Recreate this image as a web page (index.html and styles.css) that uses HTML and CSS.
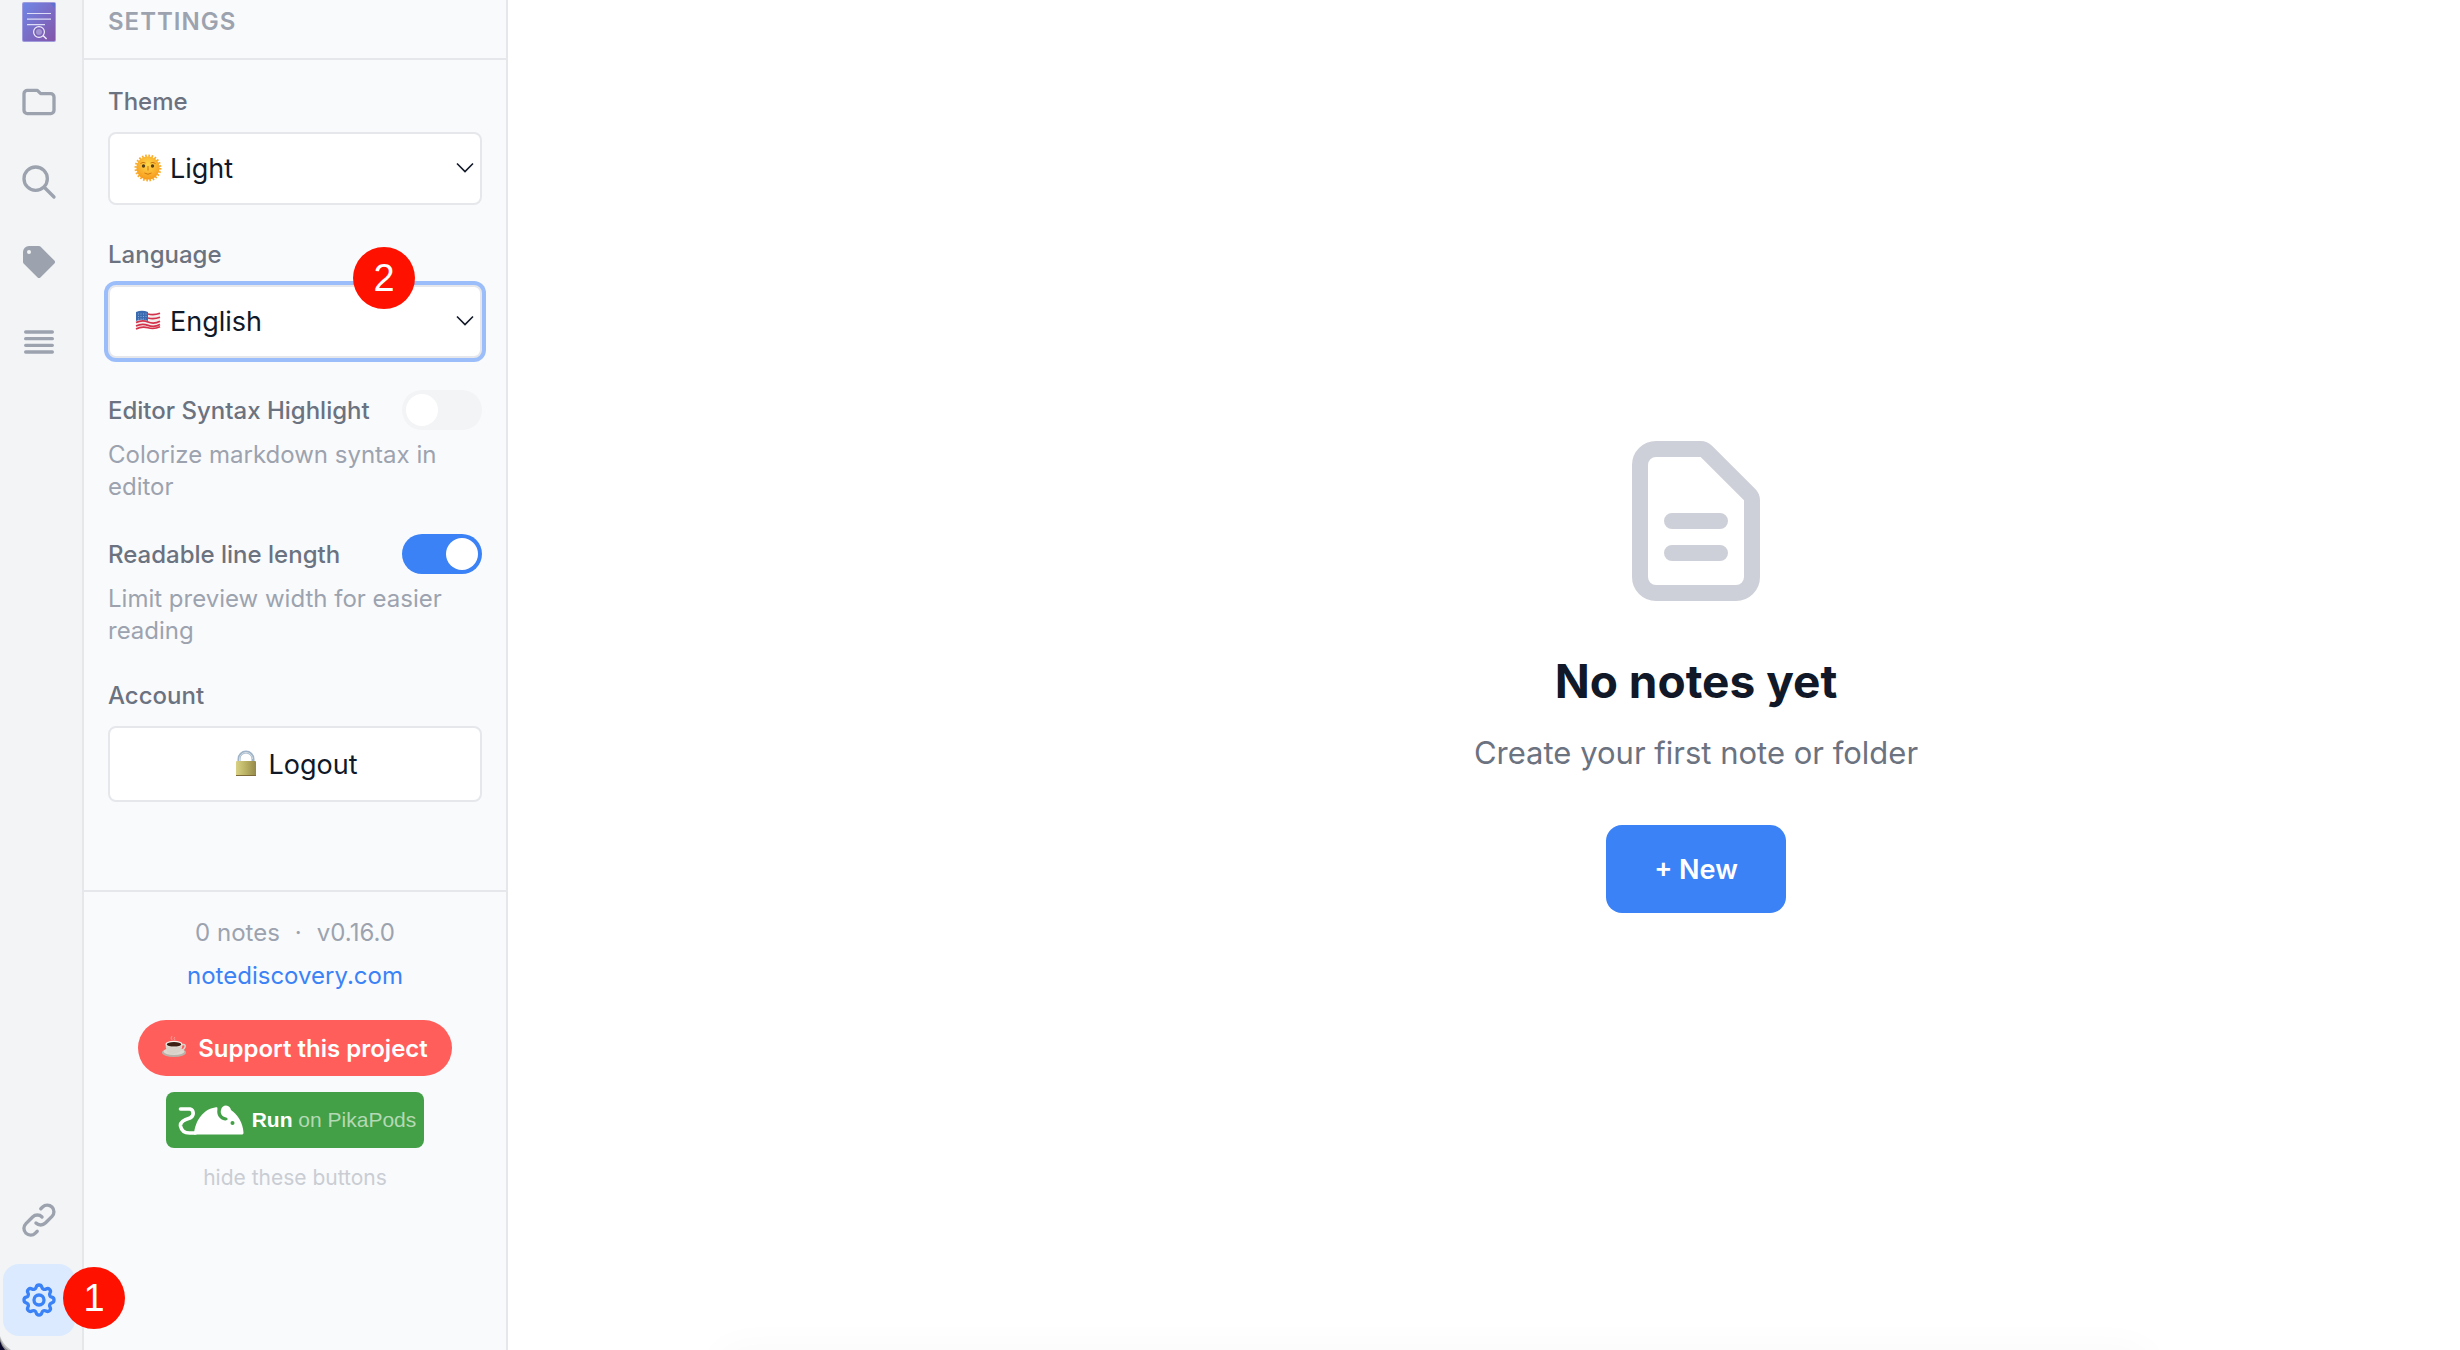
FILE: index.html
```
<!DOCTYPE html>
<html lang="en">
<head>
<meta charset="utf-8">
<title>NoteDiscovery</title>
<link rel="stylesheet" href="styles.css">
</head>
<body>
<div class="app">
  <nav class="rail" aria-label="Views">
    <svg class="logo" viewBox="0 0 34 40" aria-hidden="true">
      <defs>
        <linearGradient id="logo-fill" x1="0" y1="0" x2="1" y2="1">
          <stop offset="0" stop-color="#6f86e6"/><stop offset="1" stop-color="#8455a9"/>
        </linearGradient>
      </defs>
      <rect width="34" height="40" rx="2" fill="#a09bdd"/>
      <rect x="1" y="1" width="32" height="38" rx="1" fill="url(#logo-fill)"/>
      <path d="M28 1h5v5z" fill="#5f6fd0"/>
      <path d="M5 11.500h24M5 17.200h24M5 22.700h18" stroke="#dcdcf6" stroke-width="1.200"/>
      <circle cx="17" cy="30" r="5.400" fill="#7a63b8" stroke="#f1effa" stroke-width="1.200"/>
      <circle cx="17" cy="30" r="3" fill="#a394d2"/>
      <path d="M21 33.500l3.600 3.600" stroke="#f1effa" stroke-width="1.400"/>
    </svg>
    <button class="rail-btn" type="button" aria-label="Files"><svg class="line-icon" viewBox="0 0 24 24"><path d="M3 7v10a2 2 0 002 2h14a2 2 0 002-2V9a2 2 0 00-2-2h-6l-2-2H5a2 2 0 00-2 2z"/></svg></button>
    <button class="rail-btn" type="button" aria-label="Search"><svg class="line-icon" viewBox="0 0 24 24"><path d="M21 21l-6-6m2-5a7 7 0 11-14 0 7 7 0 0114 0z"/></svg></button>
    <button class="rail-btn" type="button" aria-label="Tags"><svg class="solid-icon" viewBox="0 0 20 20"><path fill-rule="evenodd" d="M17.707 9.293a1 1 0 010 1.414l-7 7a1 1 0 01-1.414 0l-7-7A.997.997 0 012 10V5a3 3 0 013-3h5c.256 0 .512.098.707.293l7 7zM5 6a1 1 0 100-2 1 1 0 000 2z" clip-rule="evenodd"/></svg></button>
    <button class="rail-btn" type="button" aria-label="Outline"><svg class="line-icon" viewBox="0 0 24 24"><path d="M4 6h16M4 10h16M4 14h16M4 18h16"/></svg></button>
    <span class="rail-space"></span>
    <button class="rail-btn" type="button" aria-label="Backlinks"><svg class="line-icon" viewBox="0 0 24 24"><path d="M13.828 10.172a4 4 0 00-5.656 0l-4 4a4 4 0 105.656 5.656l1.102-1.101m-.758-4.899a4 4 0 005.656 0l4-4a4 4 0 00-5.656-5.656l-1.100 1.100"/></svg></button>
    <button class="rail-btn rail-btn-active" type="button" aria-label="Settings"><svg class="line-icon" viewBox="0 0 24 24"><path d="M10.325 4.317c.426-1.756 2.924-1.756 3.350 0a1.724 1.724 0 002.573 1.066c1.543-.94 3.310.826 2.370 2.370a1.724 1.724 0 001.065 2.572c1.756.426 1.756 2.924 0 3.350a1.724 1.724 0 00-1.066 2.573c.94 1.543-.826 3.310-2.370 2.370a1.724 1.724 0 00-2.572 1.065c-.426 1.756-2.924 1.756-3.350 0a1.724 1.724 0 00-2.573-1.066c-1.543.94-3.310-.826-2.370-2.370a1.724 1.724 0 00-1.065-2.572c-1.756-.426-1.756-2.924 0-3.350a1.724 1.724 0 001.066-2.573c-.94-1.543.826-3.310 2.370-2.370.996.608 2.296.07 2.572-1.065z"/><path d="M15 12a3 3 0 11-6 0 3 3 0 016 0z"/></svg><span class="marker marker-one">1</span></button>
    <svg class="window-corner" viewBox="0 0 12 16" aria-hidden="true"><path d="M0 2Q3 11 11 16H0z" fill="#c4c4c4"/><path d="M0 4Q2 12 8 16H0z" fill="#8c8c8c"/><path d="M0 7Q2 13 5 16H0z" fill="#0a0a2c"/></svg>
  </nav>

  <aside class="sidebar">
    <h2 class="panel-title">SETTINGS</h2>
    <div class="settings">
      <div class="field">
        <label class="label" for="theme">Theme</label>
        <div class="select-wrap">
          <svg class="emoji select-emoji" viewBox="0 0 28 28" aria-hidden="true">
            <defs><radialGradient id="sun-fill" cx=".5" cy=".35" r=".65"><stop offset="0" stop-color="#ffd84a"/><stop offset="1" stop-color="#f79a1c"/></radialGradient></defs>
            <circle cx="14" cy="14" r="12" fill="none" stroke="#f9ab2b" stroke-width="3" stroke-dasharray="1.600 1.540"/>
            <circle cx="14" cy="14" r="11.500" fill="url(#sun-fill)"/>
            <circle cx="9.500" cy="12" r="1.700" fill="#54401c"/><circle cx="18.500" cy="12" r="1.700" fill="#54401c"/>
            <path d="M6.500 9.500q2.500-2 5-.5M16.500 9q2.500-1.500 5 .5M14 12v4.500M10.500 19q3.500 2.500 7 0" fill="none" stroke="#cf7710" stroke-width="1"/>
          </svg>
          <select class="select" id="theme"><option>Light</option></select>
          <svg class="chevron" viewBox="0 0 18 12" aria-hidden="true"><path d="M1 1.500l8 8 8-8" stroke-width="1.600"/></svg>
        </div>
      </div>
      <div class="field">
        <label class="label" for="language">Language</label>
        <div class="select-wrap">
          <svg class="emoji select-emoji" viewBox="0 0 28 28" aria-hidden="true">
            <path d="M2 7q6-3 12-1t12-1v15q-6 3-12 1T2 22z" fill="#f3eeee"/>
            <path d="M14 7q6 1.500 12-.8M14 11q6 1.500 12-.8M2 15.600q6-3 12-.6t12-.8M2 19q6-3 12-.6t12-.8M2 22q6-3 12-1.200t12-1" fill="none" stroke="#d4314a" stroke-width="1.700"/>
            <path d="M2 5q6-2.500 12 0v9q-6-2.500-12 0z" fill="#3a6bb0"/>
            <path d="M4 7h9M4 9.500h9M4 12h8" stroke="#9db9df" stroke-width=".8" stroke-dasharray="1 1.500"/>
          </svg>
          <select class="select select-focus" id="language"><option>English</option></select>
          <svg class="chevron" viewBox="0 0 18 12" aria-hidden="true"><path d="M1 1.500l8 8 8-8" stroke-width="1.600"/></svg>
          <span class="marker marker-two">2</span>
        </div>
      </div>
      <div class="field toggle-field">
        <div class="toggle-row">
          <label class="label" for="syntax">Editor Syntax Highlight</label>
          <input class="toggle" type="checkbox" id="syntax">
        </div>
        <p class="hint">Colorize markdown syntax in editor</p>
      </div>
      <div class="field toggle-field">
        <div class="toggle-row">
          <label class="label" for="readable">Readable line length</label>
          <input class="toggle" type="checkbox" id="readable" checked>
        </div>
        <p class="hint">Limit preview width for easier reading</p>
      </div>
      <div class="field">
        <h3 class="label">Account</h3>
        <button class="logout" type="button">
          <svg class="emoji" viewBox="0 0 28 28" aria-hidden="true">
            <defs><linearGradient id="lock-fill"><stop offset="0" stop-color="#d9d184"/><stop offset=".5" stop-color="#b9b063"/><stop offset="1" stop-color="#94894a"/></linearGradient></defs>
            <path d="M7 13V9a7 7 0 0114 0V13" fill="none" stroke="#9fb4c8" stroke-width="3"/>
            <path d="M7.500 13V9a6.500 6.500 0 0113 0" fill="none" stroke="#d5dee6" stroke-width="1"/>
            <rect x="4" y="11" width="20" height="15" rx="1" fill="url(#lock-fill)"/>
            <path d="M4 25.500h20" stroke="#7d6a38" stroke-width="1"/>
          </svg>
          Logout
        </button>
      </div>
    </div>
    <footer class="footer">
      <p class="stats"><span>0 notes</span><span>·</span><span>v0.16.0</span></p>
      <a class="site" href="#site">notediscovery.com</a>
      <a class="support" href="#support">
        <svg class="cup" viewBox="0 0 24 22" aria-hidden="true">
          <path d="M10 4q-2-2 0-4M13 4q-2-2 0-3" fill="none" stroke="#ef9c94" stroke-width="1"/>
          <ellipse cx="12" cy="16.500" rx="12" ry="4.500" fill="#b9b2a9"/><ellipse cx="12" cy="15.500" rx="10.500" ry="3.500" fill="#ddd8d0"/>
          <path d="M19 9q5-1.500 4 2t-6 3" fill="none" stroke="#d9d4cc" stroke-width="1.500"/>
          <path d="M3.500 8h17q0 9-8.500 10T3.500 8z" fill="#d8d2c8"/>
          <ellipse cx="12" cy="8" rx="8.500" ry="3.200" fill="#f4f0ea"/><ellipse cx="12" cy="8.300" rx="7.300" ry="2.300" fill="#3d1f14"/>
        </svg>
        Support this project
      </a>
      <a class="pika" href="#pikapods">
        <svg class="mouse" viewBox="0 0 66 30" aria-hidden="true">
          <path d="M2.500 4h9.500c4 1 4.500 7 0 9C5 15 2 17 2.500 21c1 5 5 7 9 7h6" fill="none" stroke="#fff" stroke-width="3.600" stroke-linecap="round"/>
          <path d="M16 29.500C17 15 26 4 37 2.500c2.500-.4 2.600 0 2.400 2C38.500 10 41.500 14.500 47 15.500c3 .3 3.600-2.200 1-2.900-4-1.100-6-4.100-5-7.600C43.500 2 45.500.5 48 .5c3 .3 4.500 2 5 4.500C60 10 65 18 65.500 27.500c0 1.500-.5 2-2 2z" fill="#fff"/>
          <circle cx="54.500" cy="18" r="2" fill="#43a047"/>
        </svg>
        <span><strong>Run</strong> on PikaPods</span>
      </a>
      <button class="hide" type="button">hide these buttons</button>
    </footer>
  </aside>

  <main class="main">
    <div class="empty">
      <svg class="doc" viewBox="0 0 24 24" aria-hidden="true"><path d="M9 12h6m-6 4h6m2 5H7a2 2 0 01-2-2V5a2 2 0 012-2h5.586a1 1 0 01.707.293l5.414 5.414a1 1 0 01.293.707V19a2 2 0 01-2 2z"/></svg>
      <h1 class="empty-title">No notes yet</h1>
      <p class="empty-text">Create your first note or folder</p>
      <button class="new" type="button">+ New</button>
    </div>
  </main>
</div>
</body>
</html>
```
FILE: styles.css
```
* { box-sizing: border-box; }

body {
  margin: 0;
  font-family: Inter, "Liberation Sans", sans-serif;
  color: #111827;
  background: #fff;
}

h1, h2, h3, p { margin: 0; }
button, select { font: inherit; color: inherit; }
button { border: 0; padding: 0; background: none; }
a { text-decoration: none; }
svg { display: block; flex: none; }

.app {
  display: grid;
  grid-template-columns: 84px 424px 1fr;
  min-height: 100vh;
}

/* Icon rail */
.rail {
  position: relative;
  display: flex;
  flex-direction: column;
  gap: 8px;
  padding: 2px 7px 14px 3px;
  background: #f3f4f6;
  border-right: 2px solid #e5e7eb;
}
.logo { width: 34px; height: 40px; margin: 0 auto 16px; }
.rail-btn {
  position: relative;
  display: grid;
  place-items: center;
  height: 72px;
  border-radius: 16px;
  color: #9ca3af;
}
.rail-btn svg { width: 40px; height: 40px; }
.rail-btn-active { color: #3b82f6; background: #dbeafe; }
.rail-space { flex: 1; }
.line-icon {
  fill: none;
  stroke: currentColor;
  stroke-width: 2;
  stroke-linecap: round;
  stroke-linejoin: round;
}
.solid-icon { fill: currentColor; }
.window-corner { position: absolute; left: 0; bottom: 0; width: 12px; height: 16px; }

/* Numbered callouts */
.marker {
  position: absolute;
  z-index: 2;
  width: 62px;
  height: 62px;
  border-radius: 50%;
  background: #ff1100;
  color: #fff;
  font: 38px/62px "Liberation Sans", sans-serif;
  text-align: center;
}
.marker-one { left: 60px; top: 3px; }
.marker-two { right: 67px; top: -38px; }

/* Settings panel */
.sidebar {
  background: #f9fafc;
  border-right: 2px solid #e5e7eb;
}
.panel-title {
  height: 60px;
  padding: 6px 24px 0;
  border-bottom: 2px solid #e5e7eb;
  color: #9ca3af;
  font-size: 24px;
  line-height: 32px;
  font-weight: 600;
  letter-spacing: 1px;
}
.settings {
  display: flex;
  flex-direction: column;
  height: 830px;
  padding: 24px 24px 0;
}
.label {
  display: block;
  padding-top: 2px;
  color: #6b7280;
  font-size: 24px;
  line-height: 32px;
  font-weight: 500;
}
.field > .label { margin-bottom: 14px; }
.field { margin-bottom: 32px; }
.select-wrap { position: relative; }
.select {
  display: block;
  appearance: none;
  width: 100%;
  height: 73px;
  padding: 0 48px 0 60px;
  border: 2px solid #e5e7eb;
  border-radius: 8px;
  background: #fff;
  font-size: 27px;
}
.select-focus { box-shadow: 0 0 0 4px #9bbefb; }
.emoji { width: 28px; height: 28px; }
.select-emoji { position: absolute; left: 26px; top: 22px; }
.chevron {
  position: absolute;
  right: 8px;
  top: 30px;
  width: 18px;
  height: 12px;
  fill: none;
  stroke: #111827;
}
.toggle-field { margin-bottom: 31px; }
.toggle-row {
  display: flex;
  align-items: center;
  justify-content: space-between;
  height: 40px;
  margin-bottom: 9px;
}
.toggle {
  appearance: none;
  width: 80px;
  height: 40px;
  margin: 0;
  padding: 4px;
  border-radius: 20px;
  background: #f3f4f6;
}
.toggle::before {
  content: "";
  display: block;
  width: 32px;
  height: 32px;
  border-radius: 50%;
  background: #fff;
}
.toggle:checked { background: #3b82f6; }
.toggle:checked::before { margin-left: auto; }
.hint {
  color: #9ca3af;
  font-size: 24px;
  line-height: 32px;
}
.logout {
  display: flex;
  align-items: center;
  justify-content: center;
  gap: 8px;
  width: 100%;
  height: 76px;
  border: 2px solid #e5e7eb;
  border-radius: 8px;
  background: #fff;
  font-size: 27px;
}

/* Panel footer */
.footer {
  display: flex;
  flex-direction: column;
  align-items: center;
  padding-top: 25px;
  border-top: 2px solid #e5e7eb;
  font-size: 24px;
  line-height: 32px;
}
.stats { display: flex; gap: 15px; color: #9ca3af; }
.site { margin: 11px 0 28px; color: #3b82f6; }
.support {
  display: flex;
  align-items: center;
  gap: 12px;
  height: 56px;
  padding: 2px 24px 0;
  border-radius: 28px;
  background: #ff5e5b;
  color: #fff;
  font-weight: 600;
}
.cup { width: 24px; height: 22px; margin-bottom: 4px; }
.pika {
  display: flex;
  align-items: center;
  gap: 8px;
  height: 56px;
  margin: 16px 0 14px;
  padding: 0 8px 0 12px;
  border-radius: 8px;
  background: #43a047;
  color: #b4d9b5;
  font: 21px/32px "Liberation Sans", sans-serif;
}
.pika strong { color: #fff; }
.mouse { width: 66px; height: 30px; }
.hide { color: #c9cdd3; font-size: 21px; line-height: 32px; }

/* Empty state */
.main {
  position: relative;
  overflow: hidden;
  display: grid;
  justify-items: center;
  align-content: center;
  padding: 0 0 12px 424px;
}
.main::after {
  content: "";
  position: absolute;
  left: 210px;
  right: 310px;
  top: 100%;
  height: 40px;
  border-radius: 40px;
  box-shadow: 0 0 40px rgba(0, 0, 0, .03);
}
.empty { text-align: center; }
.doc {
  width: 192px;
  height: 192px;
  margin: 0 auto 32px;
  fill: none;
  stroke: #cdd0d8;
  stroke-width: 2;
  stroke-linecap: round;
  stroke-linejoin: round;
}
.empty-title { font-size: 46px; line-height: 64px; font-weight: 700; }
.empty-text {
  margin: 16px 0 48px;
  color: #6b7280;
  font-size: 31px;
  line-height: 48px;
}
.new {
  height: 88px;
  padding: 0 48px;
  border-radius: 16px;
  background: #3b82f6;
  color: #fff;
  font-size: 27px;
  font-weight: 600;
}
```
